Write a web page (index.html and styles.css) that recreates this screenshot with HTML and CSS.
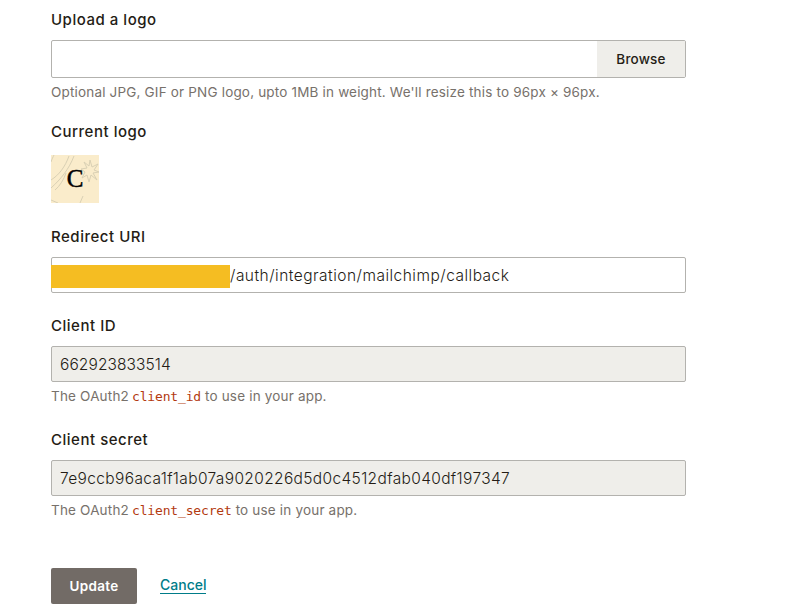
FILE: index.html
```html
<!DOCTYPE html>
<html lang="en">
<head>
<meta charset="utf-8">
<title>App settings</title>
<link rel="stylesheet" href="styles.css">
</head>
<body>
<main class="form">
  <section class="group upload">
    <div class="label"><span class="t-upload">Upload a logo</span></div>
    <div class="file"><div class="file-name"></div><div class="browse">Browse</div></div>
    <p class="hint"><span class="t-optional">Optional JPG, GIF or PNG logo, upto 1MB in weight. We'll resize this to 96px × 96px.</span></p>
  </section>
  <section class="group current">
    <div class="label"><span class="t-current">Current logo</span></div>
    <div class="logo">
      <svg class="logo-art" width="48" height="48" viewBox="0 0 48 48" fill="none" stroke="#d9d0b4" stroke-width="1">
        <path d="M0 25C8 20 14 12 18 1M0 33C10 24 18 14 23 1M4 35C9 31 13 24 15 18M0 7C1 4 2 2 3 0M0 45l7 3M29 48l3-7"/>
        <path d="M39 5l2 7 6-3-4 6 5 2-6 1 4 7-6-5-2 7-2-7-5 3 3-6-4-3 6-1-3-6 5 4z"/>
      </svg>
      <span class="logo-letter">C</span>
    </div>
  </section>
  <section class="group redirect">
    <div class="label"><span class="t-redirect">Redirect URI</span></div>
    <div class="input uri"><span class="mask"></span><span class="t-uri">/auth/integration/mailchimp/callback</span></div>
  </section>
  <section class="group client">
    <div class="label"><span class="t-client">Client ID</span></div>
    <div class="input readonly"><span class="t-id">662923833514</span></div>
    <p class="hint"><span class="t-oauth">The OAuth2</span><code>client_id</code><span class="t-use">to use in your app.</span></p>
  </section>
  <section class="group secret">
    <div class="label"><span class="t-secret">Client secret</span></div>
    <div class="input readonly"><span class="t-hash">7e9ccb96aca1f1ab07a9020226d5d0c4512dfab040df197347</span></div>
    <p class="hint"><span class="t-oauth">The OAuth2</span><code>client_secret</code><span class="t-use">to use in your app.</span></p>
  </section>
  <div class="actions">
    <div class="update">Update</div>
    <a class="cancel" href="#">Cancel</a>
  </div>
</main>
</body>
</html>
```
FILE: styles.css
```css
* { box-sizing: border-box; }
body {
  margin: 0;
  background: #fff;
  color: #241c15;
  font-family: Inter, "Liberation Sans", sans-serif;
  overflow: hidden;
}
.form { width: 635px; margin-left: 51px; padding-top: 8px; }
.label { height: 24px; margin-bottom: 8px; font-size: 15px; font-weight: 500; line-height: 24px; letter-spacing: 0.52px; white-space: nowrap; }
.hint {
  display: flex;
  height: 20px;
  margin: 4px 0 0;
  color: #77716b;
  font-size: 13.5px;
  font-weight: 420;
  line-height: 20px;
  letter-spacing: 0.18px;
  white-space: nowrap;
}
.file { display: flex; height: 38px; border: 1px solid #b3b2ae; border-radius: 2px; overflow: hidden; }
.file-name { flex: 1; }
.browse { width: 88px; background: #efeeea; font-size: 13.5px; font-weight: 500; line-height: 36px; letter-spacing: 0.2px; text-align: center; }
.upload { height: 112px; }
.current { height: 105px; }
.redirect { height: 89px; }
.client { height: 114px; }
.secret { height: 140px; }
.logo {
  position: relative;
  width: 48px;
  height: 48px;
  margin-top: 11px;
  background: #faeccb;
}
.logo-art { display: block; }
.logo-letter {
  position: absolute;
  inset: 0;
  color: #000;
  font: 25px/47px "Liberation Serif", serif;
  text-align: center;
  -webkit-text-stroke: 0.5px #000;
}
.input {
  display: flex;
  align-items: center;
  height: 36px;
  padding-left: 8px;
  border: 1px solid #b3b2ae;
  border-radius: 2px;
  font-size: 15.5px;
  font-weight: 350;
  white-space: nowrap;
}
.uri { padding-left: 0; letter-spacing: 0.48px; }
.t-id { letter-spacing: 0.1px; }
.t-hash { letter-spacing: 0.36px; }
.mask { width: 179px; height: 23px; margin-left: -1px; margin-top: 3px; background: #f5bd22; }
.readonly { background: #efeeea; }
code { margin: 0 4px 0 3px; padding-top: 1px; color: #b33a10; font: 13px/20px "DejaVu Sans Mono", monospace; letter-spacing: -0.16px; }
.actions { display: flex; align-items: center; gap: 23px; }
.update {
  width: 86px;
  height: 36px;
  border-radius: 2px;
  background: #726b66;
  color: #fff;
  font-size: 13.5px;
  font-weight: 600;
  line-height: 36px;
  letter-spacing: 0.3px;
  text-align: center;
}
.cancel {
  height: 18px;
  margin-top: -3px;
  border-bottom: 1px solid #007c89;
  color: #007c89;
  font-size: 14px;
  font-weight: 500;
  line-height: 17px;
  text-decoration: none;
}
```
